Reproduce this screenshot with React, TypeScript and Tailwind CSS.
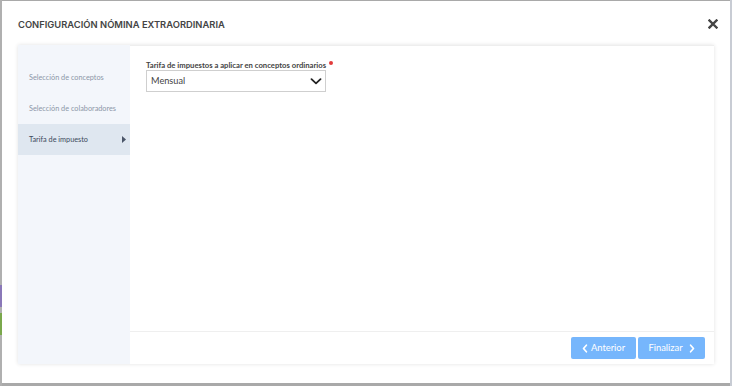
import React from "react";

function ChevronDown() {
  return (
    <svg width="12" height="7" viewBox="0 0 12 7" fill="none">
      <path d="M1.5 1.2 L6 5.3 L10.5 1.2" stroke="#222" strokeWidth="1.8" strokeLinecap="round" strokeLinejoin="round" />
    </svg>
  );
}

function ChevLeft() {
  return (
    <svg width="6" height="9" viewBox="0 0 6 9" fill="none">
      <path d="M4.4 1.2 L1.5 4.5 L4.4 7.8" stroke="#fff" strokeWidth="1.7" strokeLinecap="round" strokeLinejoin="round" />
    </svg>
  );
}

function ChevRight() {
  return (
    <svg width="6" height="9" viewBox="0 0 6 9" fill="none">
      <path d="M1.6 1.2 L4.5 4.5 L1.6 7.8" stroke="#fff" strokeWidth="1.7" strokeLinecap="round" strokeLinejoin="round" />
    </svg>
  );
}

export default function App() {
  return (
    <div className="w-[732px] h-[386px] bg-[#a9a9a9] flex overflow-hidden" style={{ fontFamily: "Lato, 'Noto Sans', sans-serif" }}>
      {/* left edge strip */}
      <div className="w-[2px] flex flex-col">
        <div className="h-[285px] bg-[#b0b0b0]" />
        <div className="h-[22px] bg-[#8a78b8]" />
        <div className="h-[6px] bg-[#b0b0b0]" />
        <div className="h-[22px] bg-[#7aa84c]" />
        <div className="flex-1 bg-[#b0b0b0]" />
      </div>
      <div className="flex-1 flex flex-col pt-[1px] pb-[3px]">
        <div className="flex-1 bg-white flex flex-col px-4 pb-[19px]">
          {/* header */}
          <div className="h-[44px] flex items-center justify-between pt-[4px] mr-[-4px]">
            <div className="text-[9.4px] font-semibold text-[#444]" style={{ fontFamily: "Inter, sans-serif" }}>
              CONFIGURACIÓN NÓMINA EXTRAORDINARIA
            </div>
            <svg width="10" height="10" viewBox="0 0 10 10" className="mb-[2px]">
              <path d="M1.5 1.5 L8.5 8.5 M8.5 1.5 L1.5 8.5" stroke="#444" strokeWidth="2.4" strokeLinecap="square" />
            </svg>
          </div>
          {/* card */}
          <div className="flex-1 flex bg-white shadow-[0_0_4px_rgba(0,0,0,0.12)]">
            {/* sidebar */}
            <div className="w-[112px] bg-[#f3f6fb] pt-[17px] flex flex-col">
              <div className="h-[31px] flex items-center pl-[11px] pt-[2px] text-[7.3px] text-[#8d97a8]">Selección de conceptos</div>
              <div className="h-[31px] flex items-center pl-[11px] pt-[2px] text-[7.3px] text-[#8d97a8]">Selección de colaboradores</div>
              <div className="h-[31px] flex items-center justify-between pl-[11px] pr-[4px] pt-[2px] bg-[#dfe7f0] text-[7.3px] text-[#3d4a5c]">
                <span>Tarifa de impuesto</span>
                <svg width="4" height="7" viewBox="0 0 4 7" className="mb-[2px]">
                  <path d="M0 0 L4 3.5 L0 7 Z" fill="#4a5568" />
                </svg>
              </div>
            </div>
            {/* main */}
            <div className="flex-1 flex flex-col border-t border-[#eeeeee]">
              <div className="flex-1 pt-[15px] pl-[16px]">
                <div className="text-[7.7px] font-bold text-[#444] flex items-start leading-[8px]">
                  <span>Tarifa de impuestos a aplicar en conceptos ordinarios</span>
                  <span className="ml-[3px] mt-[0px] w-[4px] h-[4px] rounded-full bg-[#e23b3b]" />
                </div>
                <div className="mt-[1px] w-[180px] h-[22px] border border-[#cfcfcf] flex items-center justify-between pl-[4px] pr-[3px]">
                  <span className="text-[9.2px] text-[#444]">Mensual</span>
                  <ChevronDown />
                </div>
              </div>
              <div className="h-[33px] border-t border-[#efefef] flex items-start justify-end pt-[5px] pr-[9px] gap-[2px]">
                <div className="w-[65px] h-[22px] bg-[#76b6fc] rounded-[2px] flex items-center justify-center gap-[3px] text-white text-[9.4px]">
                  <ChevLeft />
                  <span>Anterior</span>
                </div>
                <div className="w-[67px] h-[22px] bg-[#76b6fc] rounded-[2px] flex items-center justify-center gap-[6px] text-white text-[9.4px]">
                  <span>Finalizar</span>
                  <ChevRight />
                </div>
              </div>
            </div>
          </div>
        </div>
      </div>
      <div className="w-[2px] bg-[#c8ccd4]" />
    </div>
  );
}
